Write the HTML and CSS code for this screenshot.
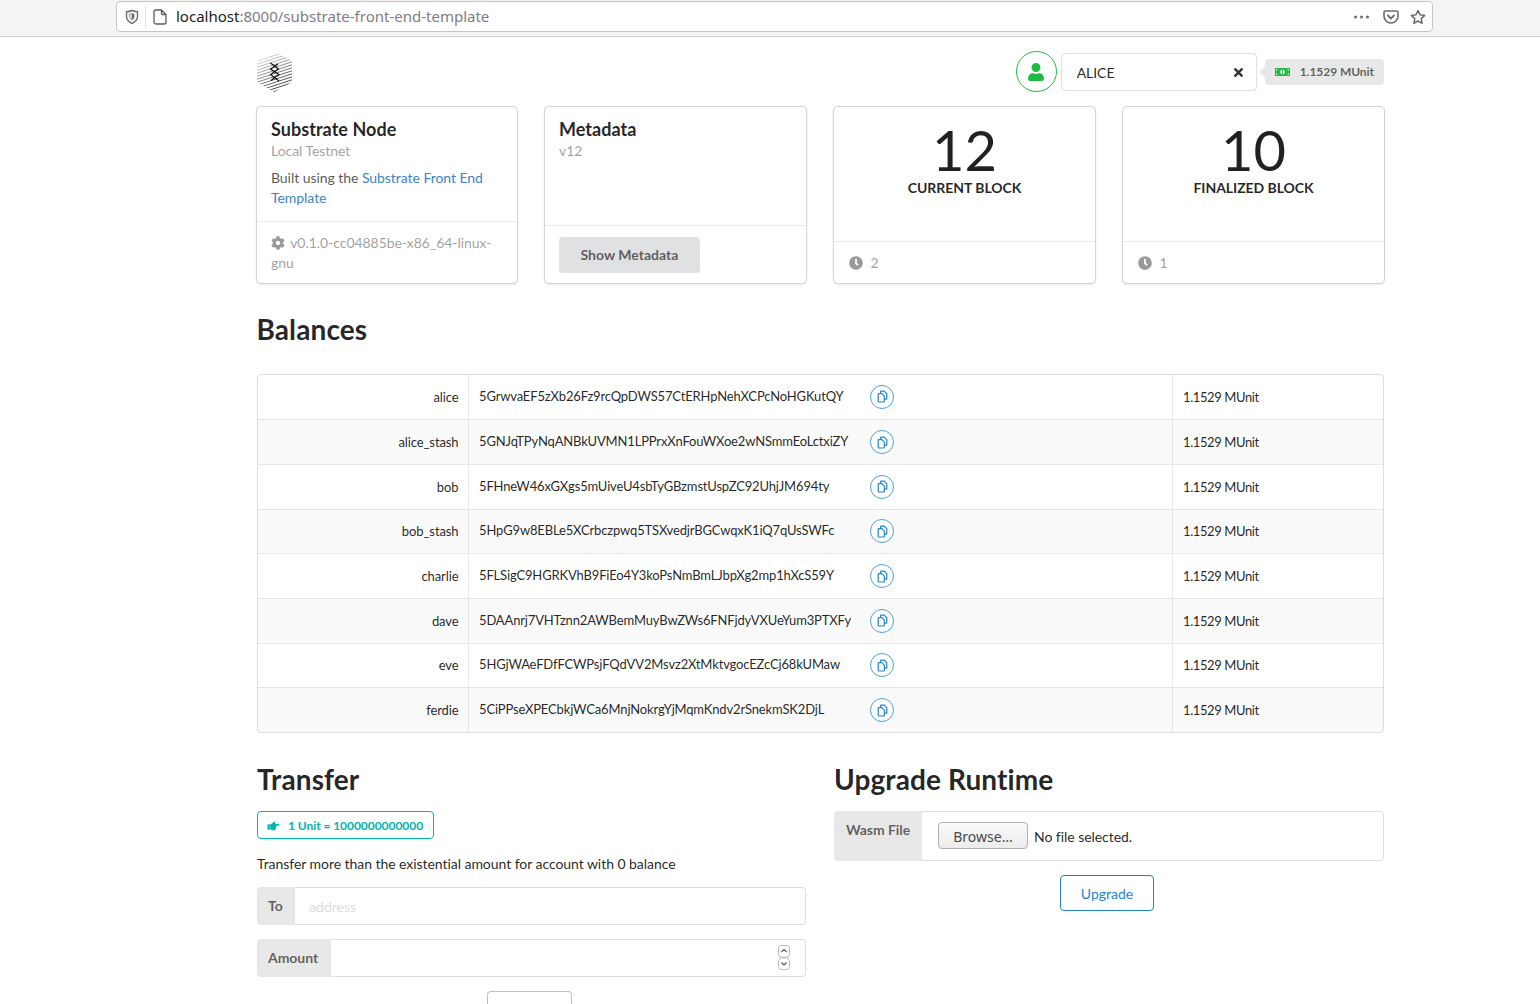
FILE: index.html
```html
<!DOCTYPE html>
<html lang="en">
<head>
  <meta charset="UTF-8" />
  <title>Substrate Front End Template</title>
  <link rel="stylesheet" href="styles.css">
</head>
<body>

  <svg class="defs" width="0" height="0" aria-hidden="true">
    <symbol id="i-copy" viewBox="0 0 14 14">
      <path d="M5 3.500V1.600c0-.3.2-.5.5-.5h3.300L11.600 4v5.400c0 .3-.2.5-.5.5H9" fill="none" stroke="currentColor" stroke-width="1.300"/>
      <path d="M2.900 3.900h3.400L9 6.600v5.800c0 .3-.2.5-.5.5H2.900c-.3 0-.5-.2-.5-.5V4.400c0-.3.2-.5.5-.5z" fill="none" stroke="currentColor" stroke-width="1.300"/>
    </symbol>
    <symbol id="i-clock" viewBox="0 0 512 512">
      <path d="M256,8C119,8,8,119,8,256S119,504,256,504,504,393,504,256,393,8,256,8Zm92.490,313h0l-20,25a16,16,0,0,1-22.490,2.500h0l-67-49.720a40,40,0,0,1-15-31.230V112a16,16,0,0,1,16-16h32a16,16,0,0,1,16,16V256l58,42.500A16,16,0,0,1,348.490,321Z" fill="currentColor"/>
    </symbol>
  </svg>

  <!-- barre du navigateur -->
  <div class="browser-bar">
    <div class="url-bar">
      <svg class="url-icon" width="14" height="16" viewBox="0 0 14 16"><path d="M7 1.500c2 .9 3.600 1.200 5.500 1.300v5c0 3-2.300 5.200-5.500 6.700-3.200-1.500-5.500-3.700-5.500-6.700v-5C3.400 2.700 5 2.400 7 1.500z" fill="none" stroke="#6b6b73" stroke-width="1.400"/><path d="M7 4.500c.8.300 1.500.5 2.400.6v2.600c0 1.300-.9 2.300-2.400 3.100z" fill="#6b6b73"/><path d="M7 4.500c-.8.300-1.500.5-2.400.6v2.600c0 1.300.9 2.300 2.400 3.100z" fill="none" stroke="#6b6b73" stroke-width=".8"/></svg>
      <span class="url-sep"></span>
      <svg class="url-icon" width="14" height="16" viewBox="0 0 14 16"><path d="M2.500 1h6L13 5.500V13c0 1-.8 2-2 2H3c-1.200 0-2-1-2-2V2.500C1 1.700 1.700 1 2.500 1zM8.500 1v3.500c0 .6.400 1 1 1H13" fill="none" stroke="#5b5b66" stroke-width="1.300"/></svg>
      <span class="url-text"><b>localhost</b>:8000/substrate-front-end-template</span>
      <span class="url-right">
        <svg class="url-dots" width="17" height="16" viewBox="0 0 17 16"><circle cx="2.500" cy="8" r="1.500" fill="#6b6b73"/><circle cx="8.500" cy="8" r="1.500" fill="#6b6b73"/><circle cx="14.500" cy="8" r="1.500" fill="#6b6b73"/></svg>
        <svg width="16" height="16" viewBox="0 0 16 16"><path d="M2.300 2h11.400c.7 0 1.300.6 1.300 1.300V7c0 4-3.100 7-7 7s-7-3-7-7V3.300C1 2.600 1.600 2 2.300 2z" fill="none" stroke="#6b6b73" stroke-width="1.600"/><path d="M5 6.500l3 3 3-3" fill="none" stroke="#6b6b73" stroke-width="1.800" stroke-linecap="round"/></svg>
        <svg width="16" height="16" viewBox="0 0 16 16"><path d="M8 1.500l2 4.300 4.700.6-3.500 3.200.9 4.700L8 12l-4.100 2.300.9-4.700L1.300 6.400 6 5.800z" fill="none" stroke="#6b6b73" stroke-width="1.500" stroke-linejoin="round"/></svg>
      </span>
    </div>
  </div>

  <div class="container">

    <div class="top-menu">
      <svg class="logo" width="37" height="41" viewBox="0 0 37 41">
        <defs>
          <linearGradient id="fade" gradientUnits="userSpaceOnUse" x1="6" y1="2" x2="28" y2="38">
            <stop offset="0" stop-color="#f0f0f0"/>
            <stop offset="0.45" stop-color="#8a8a8a"/>
            <stop offset="1" stop-color="#222"/>
          </linearGradient>
          <clipPath id="hex"><path d="M18.500 0L36 10v21L18.500 41 1 31V10z"/></clipPath>
        </defs>
        <g clip-path="url(#hex)" stroke="url(#fade)" stroke-width=".9" fill="none">
          <path d="M0 10.500L37 -1.500M0 13.500L37 1.500M0 16.500L37 4.500M0 19.500L37 7.500M0 22.500L37 10.500M0 25.500L37 13.500M0 28.500L37 16.500M0 31.500L37 19.500M0 34.500L37 22.500M0 37.500L37 25.500M0 40.500L37 28.500M0 43.500L37 31.500M0 46.500L37 34.500M0 49.500L37 37.500M0 52.500L37 40.500"/>
        </g>
        <path d="M14.500 12l8 6-8 5.500 8.500 6.500M22 13l-7.500 5 8.500 5.500-8 6" fill="none" stroke="#111" stroke-width="1.200"/>
      </svg>

      <div class="account">
        <span class="account-icon">
          <svg width="16" height="18" viewBox="0 0 448 512"><path d="M224 256c70.700 0 128-57.300 128-128S294.700 0 224 0 96 57.300 96 128s57.300 128 128 128zm89.600 32h-16.700c-22.200 10.200-46.900 16-72.900 16s-50.600-5.800-72.900-16h-16.700C60.200 288 0 348.200 0 422.400V464c0 26.500 21.500 48 48 48h352c26.500 0 48-21.500 48-48v-41.600c0-74.200-60.200-134.400-134.400-134.400z" fill="#21ba45"/></svg>
        </span>
        <div class="account-select">
          <span>ALICE</span>
          <svg width="9" height="13" viewBox="0 0 352 512"><path d="M242.720 256l100.070-100.070c12.280-12.280 12.280-32.190 0-44.480l-22.240-22.240c-12.280-12.280-32.190-12.280-44.480 0L176 189.280 75.930 89.210c-12.280-12.280-32.190-12.280-44.480 0L9.210 111.450c-12.280 12.280-12.280 32.190 0 44.480L109.280 256 9.210 356.070c-12.280 12.280-12.280 32.190 0 44.480l22.240 22.240c12.280 12.280 32.200 12.280 44.480 0L176 322.720l100.070 100.070c12.280 12.280 32.200 12.280 44.480 0l22.240-22.240c12.280-12.280 12.280-32.190 0-44.480L242.720 256z" fill="#333"/></svg>
        </div>
        <div class="balance-label">
          <svg width="15" height="8" viewBox="0 0 15 8"><rect width="15" height="8" fill="#21ba45"/><circle cx="7.500" cy="4" r="2.300" fill="#fff"/><rect x="7" y="2.500" width="1" height="3" fill="#21ba45"/><rect x="1" y="1" width="1.300" height="1.300" fill="#fff"/><rect x="12.700" y="1" width="1.300" height="1.300" fill="#fff"/><rect x="1" y="5.700" width="1.300" height="1.300" fill="#fff"/><rect x="12.700" y="5.700" width="1.300" height="1.300" fill="#fff"/></svg>
          1.1529 MUnit
        </div>
      </div>
    </div>

    <div class="cards">
      <div class="card">
        <div class="card-content">
          <div class="card-header">Substrate Node</div>
          <div class="card-meta">Local Testnet</div>
          <div class="card-desc">Built using the <a href="#">Substrate Front End Template</a></div>
        </div>
        <div class="card-extra">
          <svg class="gear" width="14" height="14" viewBox="0 0 512 512"><path d="M487.400 315.700l-42.600-24.600c4.300-23.200 4.300-47 0-70.200l42.600-24.600c4.900-2.800 7.100-8.600 5.500-14-11.100-35.600-30-67.800-54.700-94.600-3.800-4.100-10-5.100-14.800-2.300L380.800 110c-17.900-15.400-38.500-27.300-60.800-35.100V25.800c0-5.600-3.900-10.500-9.400-11.700-36.700-8.200-74.300-7.800-109.200 0-5.500 1.200-9.400 6.100-9.400 11.700V75c-22.200 7.900-42.800 19.800-60.800 35.100L88.700 85.500c-4.900-2.800-11-1.900-14.800 2.300-24.700 26.700-43.600 58.900-54.700 94.600-1.700 5.400.6 11.200 5.500 14L67.300 221c-4.300 23.200-4.300 47 0 70.200l-42.600 24.600c-4.900 2.800-7.100 8.600-5.500 14 11.100 35.600 30 67.800 54.700 94.600 3.800 4.100 10 5.100 14.800 2.300l42.600-24.600c17.900 15.400 38.500 27.300 60.800 35.100v49.200c0 5.600 3.900 10.500 9.400 11.700 36.700 8.200 74.300 7.800 109.200 0 5.500-1.200 9.400-6.100 9.400-11.700v-49.200c22.200-7.900 42.800-19.800 60.800-35.100l42.600 24.600c4.900 2.800 11 1.900 14.800-2.300 24.700-26.700 43.600-58.900 54.700-94.600 1.500-5.500-.7-11.300-5.600-14.100zM256 336c-44.100 0-80-35.900-80-80s35.900-80 80-80 80 35.900 80 80-35.900 80-80 80z" fill="currentColor"/></svg>
          v0.1.0-cc04885be-x86_64-linux-gnu
        </div>
      </div>

      <div class="card">
        <div class="card-content">
          <div class="card-header">Metadata</div>
          <div class="card-meta">v12</div>
        </div>
        <div class="card-extra">
          <button class="btn-grey">Show Metadata</button>
        </div>
      </div>

      <div class="card">
        <div class="card-content stat">
          <div class="stat-value">12</div>
          <div class="stat-label">Current Block</div>
        </div>
        <div class="card-extra">
          <svg class="clock" width="14" height="14"><use href="#i-clock"/></svg> 2
        </div>
      </div>

      <div class="card">
        <div class="card-content stat">
          <div class="stat-value">10</div>
          <div class="stat-label">Finalized Block</div>
        </div>
        <div class="card-extra">
          <svg class="clock" width="14" height="14"><use href="#i-clock"/></svg> 1
        </div>
      </div>
    </div>

    <h1 class="balances-title">Balances</h1>

    <table class="balances">
      <tr>
        <td class="name">alice</td>
        <td><span class="address">5GrwvaEF5zXb26Fz9rcQpDWS57CtERHpNehXCPcNoHGKutQY</span><button class="copy"><svg width="13" height="13"><use href="#i-copy"/></svg></button></td>
        <td class="amount">1.1529 MUnit</td>
      </tr>
      <tr>
        <td class="name">alice_stash</td>
        <td><span class="address">5GNJqTPyNqANBkUVMN1LPPrxXnFouWXoe2wNSmmEoLctxiZY</span><button class="copy"><svg width="13" height="13"><use href="#i-copy"/></svg></button></td>
        <td class="amount">1.1529 MUnit</td>
      </tr>
      <tr>
        <td class="name">bob</td>
        <td><span class="address">5FHneW46xGXgs5mUiveU4sbTyGBzmstUspZC92UhjJM694ty</span><button class="copy"><svg width="13" height="13"><use href="#i-copy"/></svg></button></td>
        <td class="amount">1.1529 MUnit</td>
      </tr>
      <tr>
        <td class="name">bob_stash</td>
        <td><span class="address">5HpG9w8EBLe5XCrbczpwq5TSXvedjrBGCwqxK1iQ7qUsSWFc</span><button class="copy"><svg width="13" height="13"><use href="#i-copy"/></svg></button></td>
        <td class="amount">1.1529 MUnit</td>
      </tr>
      <tr>
        <td class="name">charlie</td>
        <td><span class="address">5FLSigC9HGRKVhB9FiEo4Y3koPsNmBmLJbpXg2mp1hXcS59Y</span><button class="copy"><svg width="13" height="13"><use href="#i-copy"/></svg></button></td>
        <td class="amount">1.1529 MUnit</td>
      </tr>
      <tr>
        <td class="name">dave</td>
        <td><span class="address">5DAAnrj7VHTznn2AWBemMuyBwZWs6FNFjdyVXUeYum3PTXFy</span><button class="copy"><svg width="13" height="13"><use href="#i-copy"/></svg></button></td>
        <td class="amount">1.1529 MUnit</td>
      </tr>
      <tr>
        <td class="name">eve</td>
        <td><span class="address">5HGjWAeFDfFCWPsjFQdVV2Msvz2XtMktvgocEZcCj68kUMaw</span><button class="copy"><svg width="13" height="13"><use href="#i-copy"/></svg></button></td>
        <td class="amount">1.1529 MUnit</td>
      </tr>
      <tr>
        <td class="name">ferdie</td>
        <td><span class="address">5CiPPseXPECbkjWCa6MnjNokrgYjMqmKndv2rSnekmSK2DjL</span><button class="copy"><svg width="13" height="13"><use href="#i-copy"/></svg></button></td>
        <td class="amount">1.1529 MUnit</td>
      </tr>
    </table>

    <div class="forms">
      <div class="form-col">
        <h1>Transfer</h1>
        <div class="unit-label">
          <svg width="13" height="12" viewBox="0 0 512 512"><path d="M512 199.652c0 23.625-20.650 43.826-44.800 43.826h-99.851c16.340 17.048 18.346 49.766-6.299 70.944 14.288 22.829 2.147 53.017-16.450 62.315C353.574 425.878 322.654 448 272 448c-2.746 0-13.276-.203-16-.195-61.971.168-76.894-31.065-123.731-38.315C120.596 407.683 112 397.599 112 385.786V214.261l.002-.001c.011-18.366 10.607-35.889 28.464-43.845 28.886-12.994 95.413-49.038 107.534-77.323 7.797-18.194 21.384-29.084 40-29.092 34.222-.014 57.752 35.098 44.119 66.908-3.583 8.359-8.312 16.670-14.153 24.918H467.200c23.450 0 44.800 20.543 44.800 43.826zM96 200v192c0 13.255-10.745 24-24 24H24c-13.255 0-24-10.745-24-24V200c0-13.255 10.745-24 24-24h48c13.255 0 24 10.745 24 24z" fill="#00b5ad"/></svg>
          1 Unit = 1000000000000
        </div>
        <p class="transfer-note">Transfer more than the existential amount for account with 0 balance</p>
        <div class="input-group">
          <span class="input-label">To</span>
          <input type="text" placeholder="address" />
        </div>
        <div class="input-group">
          <span class="input-label">Amount</span>
          <input type="text" />
          <span class="spinner">
            <svg width="14" height="25" viewBox="0 0 14 25"><rect x="1.500" y=".5" width="11" height="11.500" rx="3" fill="none" stroke="#bbb"/><rect x="1.500" y="13" width="11" height="11.500" rx="3" fill="none" stroke="#bbb"/><path d="M4.500 7l2.500-2.500L9.500 7M4.500 17.500L7 20l2.500-2.500" fill="none" stroke="#555" stroke-width="1.100"/></svg>
          </span>
        </div>
        <div class="form-action">
          <button class="btn-outline btn-submit">Submit</button>
        </div>
      </div>

      <div class="form-col">
        <h1>Upgrade Runtime</h1>
        <div class="file-group">
          <span class="file-label">Wasm File</span>
          <div class="file-field">
            <button class="browse">Browse…</button>
            <span class="file-name">No file selected.</span>
          </div>
        </div>
        <div class="form-action upgrade-action">
          <button class="btn-outline">Upgrade</button>
        </div>
      </div>
    </div>

  </div>

</body>
</html>
```

FILE: styles.css
```css
html, body {
  height: 100%;
  overflow: hidden;
}

body {
  margin: 0;
  font-family: 'Lato', sans-serif;
  font-size: 14px;
  line-height: 20px;
  letter-spacing: -0.05px;
  color: rgba(0, 0, 0, 0.87);
  background-color: #fff;
}

.defs {
  position: absolute;
}

/* browser bar */
.browser-bar {
  height: 35px;
  padding: 1px 107px 0 116px;
  background-color: #f5f4f3;
  border-bottom: 1px solid #cfcdca;
}

.url-bar {
  display: flex;
  align-items: center;
  height: 29px;
  padding-left: 8px;
  background-color: #fff;
  border: 1px solid #c8c5c1;
  border-radius: 4px;
}

.url-sep {
  width: 1px;
  height: 22px;
  margin: 0 7px 0 6px;
  background-color: #e0e0e0;
}

.url-text {
  margin-left: 9px;
  padding-bottom: 2px;
  font-family: 'Noto Sans', sans-serif;
  font-size: 15px;
  letter-spacing: 0;
  color: #7d7d85;
}

.url-text b {
  font-weight: 400;
  color: #1c1b22;
}

.url-right {
  display: flex;
  align-items: center;
  gap: 11px;
  margin-left: auto;
  padding-right: 6px;
}

.url-dots {
  margin-right: 2px;
}

/* page */
.container {
  width: 1127px;
  margin-left: 257px;
}

.top-menu {
  display: flex;
  align-items: center;
  justify-content: space-between;
  height: 41px;
  margin-top: 14px;
}

.logo {
  margin-left: -1px;
}

.account {
  display: flex;
  align-items: center;
}

.account-icon {
  display: flex;
  align-items: center;
  justify-content: center;
  box-sizing: border-box;
  width: 41px;
  height: 41px;
  border: 1px solid #21ba45;
  border-radius: 50%;
}

.account-select {
  display: flex;
  align-items: center;
  justify-content: space-between;
  box-sizing: border-box;
  width: 196px;
  height: 38px;
  margin-left: 4px;
  padding: 2px 13px 0 15px;
  border: 1px solid rgba(34, 36, 38, 0.15);
  border-radius: 4px;
}

.balance-label {
  position: relative;
  display: flex;
  align-items: center;
  gap: 10px;
  height: 26px;
  margin-left: 8px;
  padding: 0 10px;
  border-radius: 4px;
  background-color: #e8e8e8;
  color: rgba(0, 0, 0, 0.6);
  font-size: 12px;
  font-weight: 700;
}

.balance-label::before {
  content: "";
  position: absolute;
  left: -4px;
  top: 9px;
  width: 8px;
  height: 8px;
  background-color: #e8e8e8;
  transform: rotate(45deg);
}

.cards {
  display: grid;
  grid-template-columns: 260px 261px 261px 261px;
  gap: 28px;
  margin-top: 15px;
}

.card {
  display: flex;
  flex-direction: column;
  height: 176px;
  border-radius: 4px;
  box-shadow: 0 1px 3px 0 #d4d4d5, 0 0 0 1px #d4d4d5;
}

.card-content {
  flex: 1;
  padding: 11px 14px 0;
}

.card-header {
  font-size: 18px;
  font-weight: 700;
  line-height: 23px;
  letter-spacing: 0.05px;
}

.card-meta {
  color: rgba(0, 0, 0, 0.4);
}

.card-desc {
  margin-top: 7px;
  color: rgba(0, 0, 0, 0.68);
}

.card-desc a {
  color: #4183c4;
  text-decoration: none;
}

.card-extra {
  padding: 10.5px 14px;
  border-top: 1px solid rgba(34, 36, 38, 0.1);
  color: rgba(0, 0, 0, 0.4);
}

.gear {
  vertical-align: -2px;
  margin-right: 2px;
}

.clock {
  vertical-align: -2px;
  margin: 0 4px 0 1px;
}

.btn-grey {
  display: block;
  height: 36px;
  padding: 0 21.5px;
  border: none;
  border-radius: 4px;
  background-color: #e0e1e2;
  color: rgba(0, 0, 0, 0.6);
  font-family: 'Lato', sans-serif;
  font-size: 14px;
  font-weight: 700;
}

.stat {
  padding-top: 15px;
  text-align: center;
}

.stat-value {
  font-size: 56px;
  line-height: 56px;
}

.stat-label {
  font-weight: 700;
  text-transform: uppercase;
}

h1 {
  margin: 0;
  font-size: 28px;
  font-weight: 700;
  line-height: 36px;
  letter-spacing: 0.1px;
}

.balances-title {
  margin-top: 28px;
  margin-left: -0.5px;
}

.balances {
  width: 100%;
  margin-top: 26.6px;
  table-layout: fixed;
  border-collapse: separate;
  border-spacing: 0;
  border: 1px solid rgba(34, 36, 38, 0.15);
  border-radius: 4px;
  font-size: 13px;
  letter-spacing: -0.15px;
}

.balances td {
  height: 44.67px;
  box-sizing: border-box;
  padding: 0 10px;
  border-top: 1px solid rgba(34, 36, 38, 0.1);
  border-left: 1px solid rgba(34, 36, 38, 0.1);
  white-space: nowrap;
}

.balances tr:first-child td {
  border-top: none;
}

.balances tr:nth-child(even) td {
  background-color: rgba(0, 0, 50, 0.02);
}

.balances td:first-child {
  width: 210px;
  border-left: none;
}

.balances td:last-child {
  width: 211px;
}

.balances .name {
  padding-right: 9.5px;
  text-align: right;
  letter-spacing: -0.1px;
}

.balances .amount {
  letter-spacing: -0.4px;
}

.address {
  display: inline-block;
  width: 391px;
  margin-bottom: 2px;
  vertical-align: middle;
}

.copy {
  display: inline-flex;
  align-items: center;
  justify-content: center;
  width: 24px;
  height: 24px;
  padding: 0;
  vertical-align: middle;
  border: 1px solid #4a9fdc;
  border-radius: 50%;
  background: #fff;
  color: #2185d0;
}

.forms {
  display: grid;
  grid-template-columns: 549px 550px;
  gap: 28px;
  margin-top: 28px;
}

.unit-label {
  display: inline-flex;
  align-items: center;
  gap: 8px;
  box-sizing: border-box;
  height: 28px;
  margin-top: 14px;
  padding: 2px 9.5px 0 9px;
  border: 1px solid #00b5ad;
  border-radius: 4px;
  color: #00b5ad;
  font-size: 12px;
  font-weight: 700;
}

.transfer-note {
  margin: 15px 0 13px;
}

.input-group {
  position: relative;
  display: flex;
  height: 38px;
  margin-bottom: 14px;
}

.input-label {
  display: flex;
  align-items: center;
  padding: 0 12.5px 0 11px;
  border-radius: 4px 0 0 4px;
  background-color: #e8e8e8;
  color: rgba(0, 0, 0, 0.6);
  font-weight: 700;
}

.input-group input {
  flex: 1;
  box-sizing: border-box;
  min-width: 0;
  padding: 2px 14px 0;
  border: 1px solid rgba(34, 36, 38, 0.15);
  border-left: none;
  border-radius: 0 4px 4px 0;
  font-family: 'Lato', sans-serif;
  font-size: 14px;
  outline: none;
}

.input-group input::placeholder {
  color: #dcdcdc;
}

.spinner {
  position: absolute;
  right: 15px;
  top: 6px;
  display: flex;
}

.form-action {
  display: flex;
  justify-content: center;
  padding-right: 4px;
}

.btn-outline {
  height: 36px;
  padding: 2px 20px 0;
  border: 1px solid #2185d0;
  border-radius: 4px;
  background: #fff;
  color: #2185d0;
  font-family: 'Lato', sans-serif;
  font-size: 14px;
}

.btn-submit {
  border-color: rgba(33, 133, 208, 0.45);
  color: rgba(33, 133, 208, 0.45);
}

.file-group {
  display: flex;
  height: 50px;
  margin-top: 14px;
}

.file-label {
  flex-shrink: 0;
  width: 88px;
  box-sizing: border-box;
  padding: 9px 0 0 12px;
  border-radius: 4px 0 0 4px;
  background-color: #e8e8e8;
  color: rgba(0, 0, 0, 0.6);
  font-weight: 700;
  white-space: nowrap;
}

.file-field {
  flex: 1;
  display: flex;
  align-items: center;
  padding-left: 16px;
  border: 1px solid rgba(34, 36, 38, 0.15);
  border-left: none;
  border-radius: 0 4px 4px 0;
}

.browse {
  width: 90px;
  height: 27px;
  padding: 2px 0 0;
  border: 1px solid #b1b1b1;
  border-radius: 4px;
  background: linear-gradient(#fafafa, #ececec);
  color: #4a4a4a;
  font-family: 'Noto Sans', sans-serif;
  font-size: 14px;
}

.file-name {
  margin-left: 6px;
  padding-top: 2px;
}

.upgrade-action {
  margin-top: 14px;
}
```
